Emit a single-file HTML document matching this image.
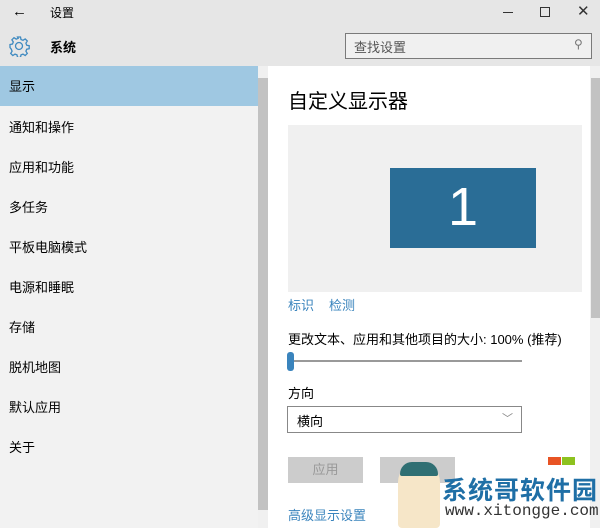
<!DOCTYPE html><html><head><meta charset="utf-8"><style>
*{margin:0;padding:0;box-sizing:border-box}
body{width:600px;height:528px;overflow:hidden;position:relative;background:#fff;font-family:"Liberation Sans","Noto Sans CJK SC",sans-serif;font-size:13px;color:#000}
.a{position:absolute}
.item{position:absolute;left:9px;font-size:13px}
</style></head><body>
<div class="a" style="left:0;top:0;width:600px;height:66px;background:#e6e6e6"></div>
<div class="a" style="left:12px;top:3px;font-size:15px">←</div>
<div class="a" style="left:50px;top:4px;font-size:12px">设置</div>
<div class="a" style="left:503px;top:12px;width:10px;height:1px;background:#333"></div>
<div class="a" style="left:540px;top:7px;width:10px;height:10px;border:1px solid #333"></div>
<div class="a" style="left:577px;top:2px;font-size:15px;color:#333">✕</div>
<svg class="a" style="left:8px;top:35px" width="22" height="22" viewBox="0 0 22 22"><g fill="none" stroke="#3f8ac0" stroke-width="1.3"><circle cx="11" cy="11" r="3.5"/><path d="M9.5 2h3l.5 2.5 2 .8 2.2-1.4 2.1 2.1-1.4 2.2.8 2 2.5.5v3l-2.5.5-.8 2 1.4 2.2-2.1 2.1-2.2-1.4-2 .8-.5 2.5h-3l-.5-2.5-2-.8-2.2 1.4-2.1-2.1 1.4-2.2-.8-2L2 12.5v-3l2.5-.5.8-2-1.4-2.2 2.1-2.1 2.2 1.4 2-.8z"/></g></svg>
<div class="a" style="left:50px;top:37px;font-size:13px;font-weight:bold">系统</div>
<div class="a" style="left:345px;top:33px;width:247px;height:26px;border:1px solid #7a7a7a;background:#f0f0f0"></div>
<div class="a" style="left:354px;top:37px;font-size:13px;color:#555">查找设置</div>
<div class="a" style="left:574px;top:37px;font-size:12px;color:#777">⚲</div>
<div class="a" style="left:0;top:66px;width:258px;height:462px;background:#f2f2f2"></div>
<div class="a" style="left:0;top:66px;width:258px;height:40px;background:#9fc8e2"></div>
<div class="item" style="top:76px">显示</div>
<div class="item" style="top:117px">通知和操作</div>
<div class="item" style="top:157px">应用和功能</div>
<div class="item" style="top:197px">多任务</div>
<div class="item" style="top:237px">平板电脑模式</div>
<div class="item" style="top:277px">电源和睡眠</div>
<div class="item" style="top:317px">存储</div>
<div class="item" style="top:357px">脱机地图</div>
<div class="item" style="top:397px">默认应用</div>
<div class="item" style="top:437px">关于</div>
<div class="a" style="left:258px;top:66px;width:10px;height:462px;background:#f0f0f0"></div>
<div class="a" style="left:258px;top:78px;width:10px;height:432px;background:#c2c2c2"></div>
<div class="a" style="left:590px;top:66px;width:10px;height:462px;background:#f0f0f0"></div>
<div class="a" style="left:591px;top:78px;width:9px;height:240px;background:#c2c2c2"></div>
<div class="a" style="left:288px;top:85px;font-size:20px">自定义显示器</div>
<div class="a" style="left:288px;top:125px;width:294px;height:167px;background:#f0f0f0"></div>
<div class="a" style="left:390px;top:168px;width:146px;height:80px;background:#2a6d96;color:#fff;font-size:54px;text-align:center;line-height:78px;transform-origin:center;">1</div>
<div class="a" style="left:288px;top:295px;color:#3a84bd">标识</div>
<div class="a" style="left:329px;top:295px;color:#3a84bd">检测</div>
<div class="a" style="left:288px;top:329px">更改文本、应用和其他项目的大小: 100% (推荐)</div>
<div class="a" style="left:290px;top:360px;width:232px;height:2px;background:#999"></div>
<div class="a" style="left:287px;top:352px;width:7px;height:19px;background:#3a84bd;border-radius:3px"></div>
<div class="a" style="left:288px;top:383px">方向</div>
<div class="a" style="left:287px;top:406px;width:235px;height:27px;border:1px solid #888;background:#fff"></div>
<div class="a" style="left:297px;top:411px">横向</div>
<div class="a" style="left:502px;top:410px;font-size:11px;color:#888">﹀</div>
<div class="a" style="left:288px;top:457px;width:75px;height:26px;background:#ccc;color:#999;text-align:center;line-height:26px">应用</div>
<div class="a" style="left:380px;top:457px;width:75px;height:26px;background:#ccc"></div>
<div class="a" style="left:288px;top:505px;color:#3a84bd">高级显示设置</div>
<div class="a" style="left:548px;top:457px;width:13px;height:8px;background:#e85424"></div>
<div class="a" style="left:562px;top:457px;width:13px;height:8px;background:#8dc21f"></div>
<div class="a" style="left:398px;top:462px;width:42px;height:66px;background:#f6e6c8;border-radius:20px 20px 4px 4px"></div>
<div class="a" style="left:400px;top:462px;width:38px;height:14px;background:#2f6f73;border-radius:12px 12px 2px 2px"></div>
<div class="a" style="left:442px;top:471px;font-size:25px;color:#1f6fa6;font-weight:bold;letter-spacing:1px">系统哥软件园</div>
<div class="a" style="left:445px;top:502px;font-size:16px;color:#333;font-family:'Liberation Mono',monospace">www.xitongge.com</div>
</body></html>
